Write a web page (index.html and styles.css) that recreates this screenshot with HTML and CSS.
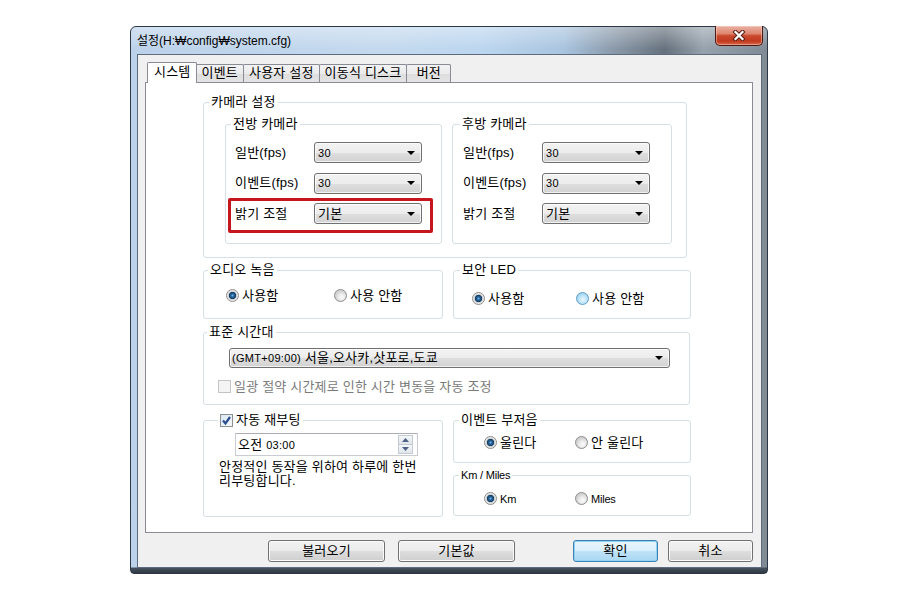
FILE: index.html
```html
<!DOCTYPE html>
<html lang="ko">
<head>
<meta charset="utf-8">
<title>설정</title>
<link rel="stylesheet" href="styles.css">
</head>
<body>
<div class="window">
  <div class="titlebar">
    <span class="title">설정(H:₩config₩system.cfg)</span>
    <span class="close" role="button" aria-label="닫기">
      <svg width="14" height="11" viewBox="0 0 14 11"><path d="M3.5 2 L10.5 9 M10.5 2 L3.5 9" stroke="#5a1d14" stroke-width="4.2" stroke-linecap="square" fill="none"/><path d="M3.5 2 L10.5 9 M10.5 2 L3.5 9" stroke="#ffffff" stroke-width="2.2" stroke-linecap="square" fill="none"/></svg>
    </span>
  </div>
  <div class="client">
    <div class="tabs">
      <div class="tab active">시스템</div>
      <div class="tab">이벤트</div>
      <div class="tab">사용자 설정</div>
      <div class="tab">이동식 디스크</div>
      <div class="tab">버전</div>
    </div>
    <div class="panel">
      <fieldset class="grp cam">
        <legend>카메라 설정</legend>
        <div class="cam-cols">
          <fieldset class="grp sub front">
            <legend>전방 카메라</legend>
            <div class="row"><span class="lbl">일반(fps)</span><span class="combo"><span class="num">30</span><span class="arrow"></span></span></div>
            <div class="row"><span class="lbl">이벤트(fps)</span><span class="combo"><span class="num">30</span><span class="arrow"></span></span></div>
            <div class="row marked"><span class="lbl">밝기 조절</span><span class="combo"><span>기본</span><span class="arrow"></span></span><span class="highlight"></span></div>
          </fieldset>
          <fieldset class="grp sub rear">
            <legend>후방 카메라</legend>
            <div class="row"><span class="lbl">일반(fps)</span><span class="combo"><span class="num">30</span><span class="arrow"></span></span></div>
            <div class="row"><span class="lbl">이벤트(fps)</span><span class="combo"><span class="num">30</span><span class="arrow"></span></span></div>
            <div class="row"><span class="lbl">밝기 조절</span><span class="combo"><span>기본</span><span class="arrow"></span></span></div>
          </fieldset>
        </div>
      </fieldset>

      <div class="pair">
        <fieldset class="grp audio">
          <legend>오디오 녹음</legend>
          <div class="opts">
            <span class="opt"><span class="radio on"></span>사용함</span>
            <span class="opt"><span class="radio"></span>사용 안함</span>
          </div>
        </fieldset>
        <fieldset class="grp led">
          <legend>보안 LED</legend>
          <div class="opts">
            <span class="opt"><span class="radio on"></span>사용함</span>
            <span class="opt"><span class="radio hover"></span>사용 안함</span>
          </div>
        </fieldset>
      </div>

      <fieldset class="grp tz">
        <legend>표준 시간대</legend>
        <span class="combo wide"><span><span class="num">(GMT+09:00)</span> 서울,오사카,삿포로,도쿄</span><span class="arrow"></span></span>
        <div class="chkrow"><span class="check disabled"></span>일광 절약 시간제로 인한 시간 변동을 자동 조정</div>
      </fieldset>

      <div class="bottom">
        <fieldset class="grp reboot">
          <legend><span class="check on"><svg width="11" height="11" viewBox="0 0 11 11"><path d="M2 5.5 L4.5 8.5 L9 2" stroke="#2a4d8f" stroke-width="2.2" fill="none"/></svg></span>자동 재부팅</legend>
          <div class="spin">
            <span>오전 <span class="num">03:00</span></span>
            <span class="spin-btns">
              <span class="sb"><svg width="7" height="4" viewBox="0 0 7 4"><path d="M0 4 L3.5 0 L7 4 Z" fill="#4d6185"/></svg></span>
              <span class="sb"><svg width="7" height="4" viewBox="0 0 7 4"><path d="M0 0 L3.5 4 L7 0 Z" fill="#4d6185"/></svg></span>
            </span>
          </div>
          <p class="note">안정적인 동작을 위하여 하루에 한번<br>리부팅합니다.</p>
        </fieldset>
        <div class="rcol">
          <fieldset class="grp buzz">
            <legend>이벤트 부저음</legend>
            <div class="opts">
              <span class="opt"><span class="radio on"></span>울린다</span>
              <span class="opt"><span class="radio"></span>안 울린다</span>
            </div>
          </fieldset>
          <fieldset class="grp units">
            <legend>Km / Miles</legend>
            <div class="opts">
              <span class="opt"><span class="radio on"></span>Km</span>
              <span class="opt"><span class="radio"></span>Miles</span>
            </div>
          </fieldset>
        </div>
      </div>
    </div>
    <div class="buttons">
      <button class="btn wide-btn">불러오기</button>
      <button class="btn wide-btn gap-big">기본값</button>
      <button class="btn default">확인</button>
      <button class="btn">취소</button>
    </div>
  </div>
</div>
</body>
</html>
```

FILE: styles.css
```css
* { box-sizing: border-box; }
html, body { margin: 0; padding: 0; background: #ffffff; }
body {
  font-family: "Liberation Sans", "Noto Sans CJK KR", sans-serif;
  font-size: 13px;
  line-height: 14px;
  letter-spacing: 0.2px;
  color: #000;
}

.window {
  width: 638px;
  height: 548px;
  margin: 26px 0 0 130px;
  border: 1px solid #2c3845;
  border-radius: 6px 6px 4px 4px;
  padding: 0 5px 5px 6px;
  display: flex;
  flex-direction: column;
  background:
    linear-gradient(to top, #2f3944 0, #46525e 5px, rgba(0,0,0,0) 6px),
    linear-gradient(to bottom, rgba(255,255,255,0.35), rgba(255,255,255,0) 22px),
    linear-gradient(to right, #bcd2ea 0%, #c4d9ee 40%, #bcd6ef 55%, #a9c4df 68%, #8a99a9 76%, #66717d 84%, #97a2ad 90%, #7f8a95 100%);
}

.titlebar {
  height: 27px;
  display: flex;
  justify-content: space-between;
  align-items: flex-start;
}
.title { margin-top: 7px; font-size: 12px; line-height: 14px; letter-spacing: 0; color: #000; }

.close {
  width: 48px;
  height: 20px;
  margin: -1px -1px 0 0;
  border: 1px solid #4b1a12;
  border-top: none;
  border-radius: 0 0 5px 5px;
  background: linear-gradient(#eab2a4 0%, #de8670 40%, #c9482c 52%, #c13a1f 80%, #d9694b 100%);
  box-shadow: inset 0 0 0 1px rgba(255,220,210,0.45);
  display: flex;
  align-items: center;
  justify-content: center;
}

.client {
  flex: 1;
  background: #f0f0f0;
  border: 1px solid #5d6c7c;
  padding: 7px 8px 0 7px;
  display: flex;
  flex-direction: column;
}

.tabs {
  display: flex;
  align-items: flex-end;
  height: 21px;
  margin: 0 0 -1px 2px;
  position: relative;
  z-index: 1;
}
.tab {
  height: 18px;
  margin-bottom: 1px;
  min-width: 45px;
  padding: 0 5px;
  border: 1px solid #898c95;
  border-bottom: none;
  border-radius: 2px 2px 0 0;
  margin-left: -1px;
  text-align: center;
  line-height: 16px;
  background: linear-gradient(#f3f3f3, #ebebeb 50%, #dddddd 51%, #e4e4e4);
}
.tab.active {
  height: 21px;
  margin: 0 -1px 0 0;
  padding: 0 6px;
  background: #ffffff;
  position: relative;
  z-index: 2;
  line-height: 18px;
}

.panel {
  height: 451px;
  background: #ffffff;
  border: 1px solid #898c95;
  padding: 12px 62px 0 57px;
}

.grp {
  margin: 0;
  min-width: 0;
  border: 1px solid #d5dfe5;
  border-radius: 3px;
}
.grp > legend {
  padding: 0 2px;
  line-height: 14px;
  height: 14px;
}

.cam { margin-right: 3px; padding: 8px 15px 13px 21px; }
.cam > legend { margin-left: -16px; }
.cam-cols { display: grid; grid-template-columns: 217px 220px; column-gap: 10px; }
.sub { padding: 11px 0 19px 9px; }
.sub > legend { margin-left: -4px; }
.sub.rear { padding-left: 10px; }
.sub.rear > legend { margin-left: -3px; }

.row { display: flex; align-items: center; height: 21px; }
.row + .row { margin-top: 9.5px; }
.row.marked { position: relative; }
.lbl { width: 79px; flex: none; }

.combo {
  width: 108px;
  height: 21px;
  flex: none;
  border: 1px solid #707070;
  border-radius: 3px;
  background: linear-gradient(#f3f3f3, #ececec 50%, #dedede 51%, #d2d2d2);
  box-shadow: inset 0 0 0 1px rgba(255,255,255,0.7);
  display: flex;
  align-items: center;
  justify-content: space-between;
  padding: 0 6px 0 3px;
  white-space: nowrap;
}
.arrow {
  width: 0;
  height: 0;
  border-left: 4px solid transparent;
  border-right: 4px solid transparent;
  border-top: 4px solid #000;
}
.num { font-size: 11px; letter-spacing: 0.3px; }

.highlight {
  position: absolute;
  left: -7px;
  top: -5px;
  width: 205px;
  height: 35px;
  border: 3px solid #c5161d;
  border-radius: 2px;
}

.pair, .bottom {
  display: grid;
  grid-template-columns: 240px 238px;
  column-gap: 10px;
}
.pair { margin-top: 5px; }
.audio { padding: 12px 0 16px 22px; }
.audio > legend { margin-left: -18px; }
.led { padding: 15px 0 13px 18px; }
.led > legend { margin-left: -12px; }

.opts { display: flex; align-items: center; height: 13px; }
.opt { display: flex; align-items: center; gap: 3px; white-space: nowrap; }
.audio .opt:first-child { width: 108px; }
.led .opt:first-child { width: 104px; }
.buzz .opt:first-child, .units .opt:first-child { width: 91px; }

.radio {
  width: 13px;
  height: 13px;
  flex: none;
  border-radius: 50%;
  border: 1px solid #8c8c8c;
  background: radial-gradient(circle at 60% 65%, #fbfbfb 0, #ececec 3px, #d2d2d2 6px);
}
.radio.on {
  background: radial-gradient(circle at 50% 50%, #6fb2e0 0, #2a6aa1 1.5px, #0f3a61 3.3px, #cfcfcf 4px, #f2f2f2 5.5px);
}
.radio.hover {
  border-color: #5a9dc9;
  background: radial-gradient(circle at 55% 60%, #e9f7fe 0, #c8e9fa 3px, #a6d6f2 6px);
}

.tz { margin-top: 6px; padding: 9px 0 11px 14px; }
.tz > legend { margin-left: -11px; }
.combo.wide { width: 441px; height: 20px; margin-left: 11px; padding-left: 2px; }
.chkrow {
  margin-top: 12px;
  height: 13px;
  display: flex;
  align-items: center;
  gap: 3px;
  color: #7a7a7a;
}

.check {
  width: 13px;
  height: 13px;
  flex: none;
  border: 1px solid #8e8f8f;
  background: linear-gradient(135deg, #dcdcdc, #f8f8f8);
  display: flex;
  align-items: center;
  justify-content: center;
}
.check.disabled { border-color: #c4c4c4; background: #f4f4f4; }
.check.on { background: linear-gradient(135deg, #d8e6f2, #f6f9fc); }

.bottom { margin-top: 8px; }
.reboot { padding: 6px 0 28px 15px; }
.reboot > legend { margin-left: -1px; display: flex; align-items: center; gap: 3px; height: 14px; }
.spin {
  margin-left: 16px;
  width: 183px;
  height: 23px;
  border: 1px solid #c9cdd2;
  border-top-color: #abadb3;
  background: #ffffff;
  display: flex;
  align-items: center;
  justify-content: space-between;
  padding: 0 4px 0 2px;
}
.spin-btns { display: flex; flex-direction: column; width: 15px; }
.sb {
  height: 10px;
  border: 1px solid #c3cad2;
  background: linear-gradient(#f5f7f9, #dfe5eb);
  display: flex;
  align-items: center;
  justify-content: center;
}
.sb + .sb { margin-top: -1px; }
.note { margin: 4px 0 0 0; line-height: 14px; }

.rcol { display: flex; flex-direction: column; gap: 5px; }
.buzz { padding: 9px 0 13px 30px; }
.buzz > legend { margin-left: -25px; }
.units { padding: 10px 0 10px 30px; font-size: 11px; letter-spacing: -0.2px; }
.units > legend { margin-left: -25px; }

.buttons {
  display: flex;
  justify-content: flex-end;
  gap: 10px;
  margin-top: 7px;
}
.btn {
  width: 85px;
  height: 22px;
  padding: 0;
  font: inherit;
  letter-spacing: 0.2px;
  color: #000;
  border: 1px solid #707070;
  border-radius: 3px;
  background: linear-gradient(#f2f2f2, #ebebeb 50%, #dddddd 51%, #cfcfcf);
  box-shadow: inset 0 0 0 1px #fbfbfb;
}
.btn.wide-btn { width: 117px; }
.btn.gap-big { margin-left: 3px; margin-right: 48px; }
.btn.default {
  border-color: #3c7fb1;
  background: linear-gradient(#e9f5fc, #d9eefb 50%, #bfe3f8 51%, #a9d7f2);
  box-shadow: inset 0 0 0 1px #8fd2f5;
}
```
